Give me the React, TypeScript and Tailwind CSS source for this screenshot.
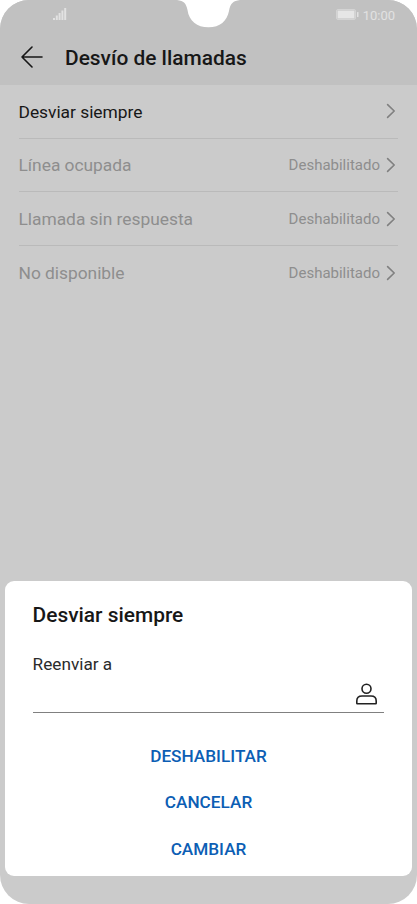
import React from "react";

const rows = [
  { label: "Desviar siempre", value: "", active: true },
  { label: "Línea ocupada", value: "Deshabilitado", active: false },
  { label: "Llamada sin respuesta", value: "Deshabilitado", active: false },
  { label: "No disponible", value: "Deshabilitado", active: false },
];

function StatusBar() {
  return (
    <div className="relative flex h-[29px] items-center justify-between pl-[53px] pr-[22px] text-[#e2e2e2]">
      <svg width="14" height="12" viewBox="0 0 14 12" fill="currentColor" className="mb-px">
        <rect x="0" y="10" width="2" height="2" />
        <rect x="2.8" y="7.500" width="2" height="4.500" />
        <rect x="5.600" y="5" width="2" height="7" />
        <rect x="8.400" y="2.500" width="2" height="9.500" />
        <rect x="11.200" y="0" width="2" height="12" />
      </svg>
      <div className="flex items-center gap-1">
        <svg width="23" height="11" viewBox="0 0 23 11" fill="currentColor">
          <rect x="0.5" y="0.5" width="19" height="10" rx="1.5" fill="none" stroke="#d4d4d4" />
          <rect x="1.500" y="1.500" width="17" height="8" fill="#e6e6e6" />
          <rect x="21" y="3" width="1.5" height="5" rx="0.5" />
        </svg>
        <span className="pt-px text-[13px] leading-none">10:00</span>
      </div>
      <svg className="absolute left-[170px] top-0" width="80" height="30" viewBox="0 0 80 30" fill="#ffffff">
        <path d="M7 0C14 1 16 3 17.500 10C19 21 27 27.300 38.500 27.300C50 27.300 57 21 59 11C60.500 3 63 1 70 0Z" />
      </svg>
    </div>
  );
}

export default function App() {
  return (
    <div className="h-[904px] w-[417px] bg-white font-['Roboto',sans-serif]">
      <div className="flex h-full flex-col overflow-hidden rounded-[29px] bg-[#cbcbcb]">
        <header className="h-[84.5px] bg-[#c1c1c1]">
          <StatusBar />
          <div className="flex h-[56px] items-center pl-[21px]">
            <svg width="22" height="22" viewBox="0 0 22 22" fill="none" stroke="#171717" strokeWidth="1.6" strokeLinecap="round" strokeLinejoin="round">
              <path d="M21 11H1M11 1L1 11l10 10" />
            </svg>
            <h1 className="ml-[22px] pt-[2px] text-[20.9px] font-medium leading-6 text-[#171717]">Desvío de llamadas</h1>
          </div>
        </header>

        <ul className="px-[19px] pt-[0.6px]">
          {rows.map((row, i) => (
            <li
              key={row.label}
              className={`flex h-[53.6px] items-center ${i < rows.length - 1 ? "border-b border-[#bababa]" : ""}`}
            >
              <span className={`-ml-[0.5px] flex-1 pt-px text-[17.4px] leading-6 tracking-[-0.03px] ${row.active ? "text-[#171717]" : "text-[#8e8e8e]"}`}>
                {row.label}
              </span>
              <span className="pt-[0.6px] text-[15px] leading-6 text-[#8e8e8e]">{row.value}</span>
              <svg className="ml-[6px] mr-[2px]" width="10" height="16" viewBox="0 0 10 16" fill="none" stroke="#808080" strokeWidth="1.6" strokeLinecap="round" strokeLinejoin="round">
                <path d="M1.600 1.600L8.200 8l-6.600 6.400" />
              </svg>
            </li>
          ))}
        </ul>

        <section className="mx-[4.6px] mt-auto mb-[28px] flex h-[295px] flex-col rounded-[9px] bg-white px-7 pt-[22px]">
          <h2 className="text-[20.9px] font-medium leading-6 text-[#171717]">Desviar siempre</h2>
          <label className="mt-[25px] text-[17.2px] leading-6 text-[#2b2b2b]">Reenviar a</label>
          <div className="flex h-[37px] justify-end border-b border-[#808080] pr-[6.4px] pt-[7px]">
            <svg width="23" height="22" viewBox="0 0 23 22" fill="none" stroke="#222222" strokeWidth="1.6" strokeLinejoin="round">
              <circle cx="11.500" cy="5.700" r="4.500" />
              <path d="M1.800 20.300V18C1.800 14.900 4 13 7 13h9c3 0 5.200 1.900 5.200 5v2.300c0 .3-.2.500-.5.500H2.300c-.3 0-.5-.2-.5-.5Z" />
            </svg>
          </div>
          <div className="mt-[20.6px] flex flex-col items-center text-[17.2px] font-medium text-[#0c5eb4]">
            <button className="h-[46.3px]">DESHABILITAR</button>
            <button className="h-[46.3px]">CANCELAR</button>
            <button className="h-[46.3px] pt-px">CAMBIAR</button>
          </div>
        </section>
      </div>
    </div>
  );
}
